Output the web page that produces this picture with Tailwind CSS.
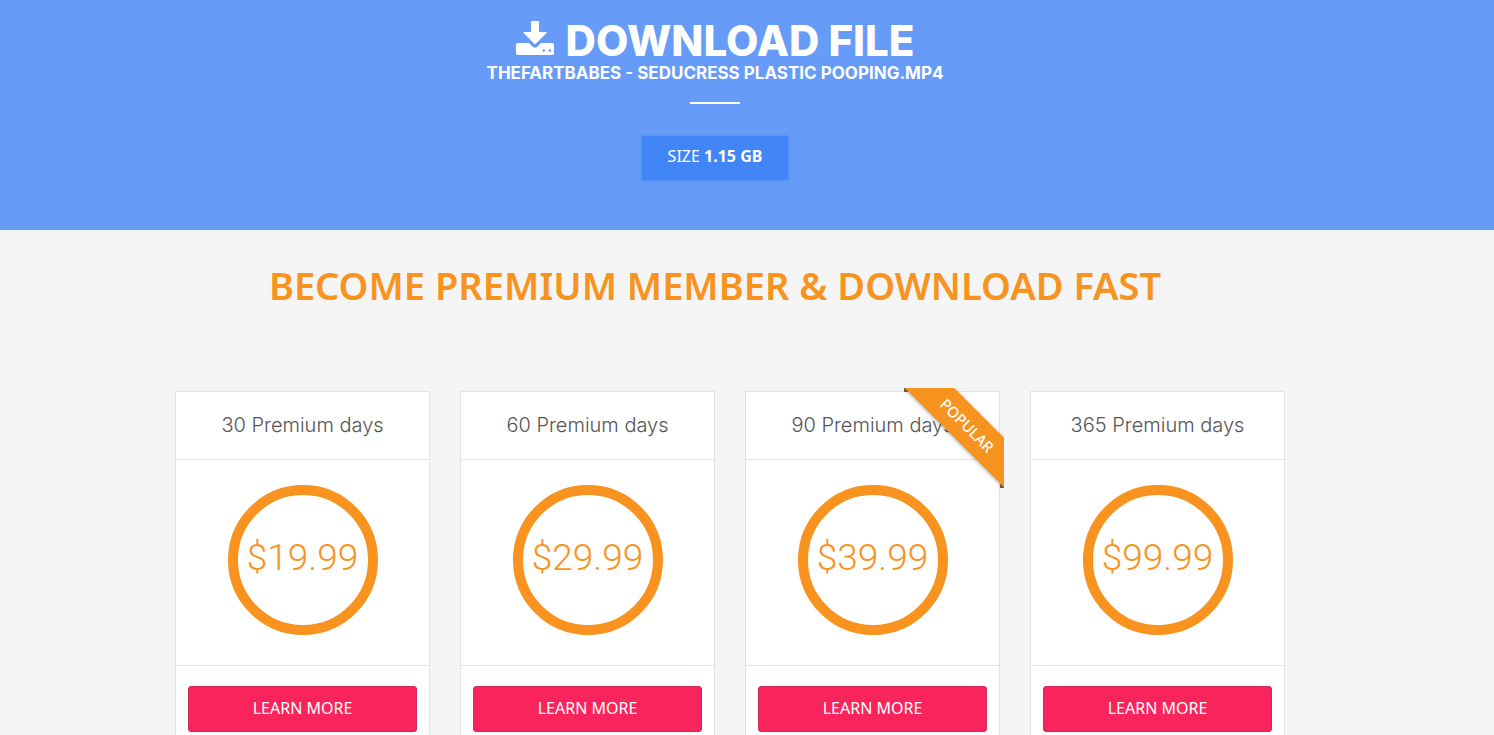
<!DOCTYPE html>
<html lang="en">
<head>
  <meta charset="UTF-8" />
  <meta name="viewport" content="width=device-width,initial-scale=1.0" />
  <title>Download File</title>
  <script src="https://cdn.jsdelivr.net/npm/@tailwindcss/browser@4"></script>
</head>
<body class="bg-[#f5f5f5] font-['Noto_Sans',sans-serif] min-h-screen overflow-x-hidden">
  <!-- Header -->
  <header class="bg-[#669bf7] text-white text-center pt-5 pb-[50px] pr-16 flex flex-col items-center">
    <h1 class="flex items-center gap-3 font-['Inter',sans-serif] font-extrabold text-[42px] leading-[42px]">
      <svg class="w-[38px] h-[36px] -mt-1.5" viewBox="0 0 38 36" fill="currentColor" aria-hidden="true">
        <path d="M15 2q0-1 1-1h6q1 0 1 1v10h7q1.500 0 .6 1L20 23.500q-1 1-2 0L7.500 13q-.9-1 .6-1H15z" />
        <path fill-rule="evenodd" d="M2 23h11l4 4q2 1.500 4 0l4-4h11q2 0 2 2v8q0 2-2 2H2q-2 0-2-2v-8q0-2 2-2zM27.800 29.300a1.300 1.300 0 1 0 0 2.600 1.300 1.300 0 0 0 0-2.600zM33.800 29.300a1.300 1.300 0 1 0 0 2.600 1.300 1.300 0 0 0 0-2.600z" />
      </svg>
      DOWNLOAD FILE
    </h1>
    <h2 class="font-['Inter',sans-serif] font-bold text-[17px] leading-[22px]">THEFARTBABES - SEDUCRESS PLASTIC POOPING.MP4</h2>
    <div class="w-[50px] h-0.5 bg-white mt-[18px]"></div>
    <p class="mt-8 w-[146px] h-11 bg-[#4285f6] text-[16px] leading-10 shadow-[0_0_3px_#4285f6]">SIZE <b>1.15 GB</b></p>
  </header>

  <!-- Plans -->
  <main class="pr-16">
    <div class="max-w-[1140px] mx-auto">
      <h2 class="text-center text-[#f7931e] font-semibold text-[38px] leading-[50px] pt-[30px]">BECOME PREMIUM MEMBER &amp; DOWNLOAD FAST</h2>
      <div class="grid grid-cols-4 gap-[30px] pl-[30px] mt-[81px]">

        <section class="bg-white border border-[#e2e2e2]">
          <h3 class="text-center text-[#555] font-['Inter',sans-serif] font-light text-[20px] leading-[67px] border-b border-[#e2e2e2]">30 Premium days</h3>
          <div class="pt-[25px] pb-[30px] border-b border-[#e2e2e2]">
            <div class="size-[150px] mx-auto rounded-full border-10 border-[#f7931e] text-[#f7931e] font-['Roboto',sans-serif] font-light text-[37px] leading-[126px] text-center">$19.99</div>
          </div>
          <div class="px-3 py-5">
            <button class="w-full h-[46px] rounded-[3px] bg-[#f8245b] border border-[#cf2a58] text-white text-[16px] pb-0.5">LEARN MORE</button>
          </div>
        </section>

        <section class="bg-white border border-[#e2e2e2]">
          <h3 class="text-center text-[#555] font-['Inter',sans-serif] font-light text-[20px] leading-[67px] border-b border-[#e2e2e2]">60 Premium days</h3>
          <div class="pt-[25px] pb-[30px] border-b border-[#e2e2e2]">
            <div class="size-[150px] mx-auto rounded-full border-10 border-[#f7931e] text-[#f7931e] font-['Roboto',sans-serif] font-light text-[37px] leading-[126px] text-center">$29.99</div>
          </div>
          <div class="px-3 py-5">
            <button class="w-full h-[46px] rounded-[3px] bg-[#f8245b] border border-[#cf2a58] text-white text-[16px] pb-0.5">LEARN MORE</button>
          </div>
        </section>

        <section class="relative bg-white border border-[#e2e2e2]">
          <!-- Corner ribbon -->
          <div class="absolute -top-1 -right-[5px] size-[100px] overflow-hidden">
            <span class="absolute top-0 left-0 size-1 bg-[#7d6540]"></span>
            <span class="absolute bottom-0 right-0 size-1 bg-[#7d6540]"></span>
            <span class="absolute top-5 -left-3 w-[150px] h-[35px] rotate-45 bg-[#f7931e] text-white text-center font-medium text-[15px] leading-[34px] shadow-[0_1px_4px_rgba(0,0,0,0.3)]">POPULAR</span>
          </div>
          <h3 class="text-center text-[#555] font-['Inter',sans-serif] font-light text-[20px] leading-[67px] border-b border-[#e2e2e2]">90 Premium days</h3>
          <div class="pt-[25px] pb-[30px] border-b border-[#e2e2e2]">
            <div class="size-[150px] mx-auto rounded-full border-10 border-[#f7931e] text-[#f7931e] font-['Roboto',sans-serif] font-light text-[37px] leading-[126px] text-center">$39.99</div>
          </div>
          <div class="px-3 py-5">
            <button class="w-full h-[46px] rounded-[3px] bg-[#f8245b] border border-[#cf2a58] text-white text-[16px] pb-0.5">LEARN MORE</button>
          </div>
        </section>

        <section class="bg-white border border-[#e2e2e2]">
          <h3 class="text-center text-[#555] font-['Inter',sans-serif] font-light text-[20px] leading-[67px] border-b border-[#e2e2e2]">365 Premium days</h3>
          <div class="pt-[25px] pb-[30px] border-b border-[#e2e2e2]">
            <div class="size-[150px] mx-auto rounded-full border-10 border-[#f7931e] text-[#f7931e] font-['Roboto',sans-serif] font-light text-[37px] leading-[126px] text-center">$99.99</div>
          </div>
          <div class="px-3 py-5">
            <button class="w-full h-[46px] rounded-[3px] bg-[#f8245b] border border-[#cf2a58] text-white text-[16px] pb-0.5">LEARN MORE</button>
          </div>
        </section>

      </div>
    </div>
  </main>
</body>
</html>
